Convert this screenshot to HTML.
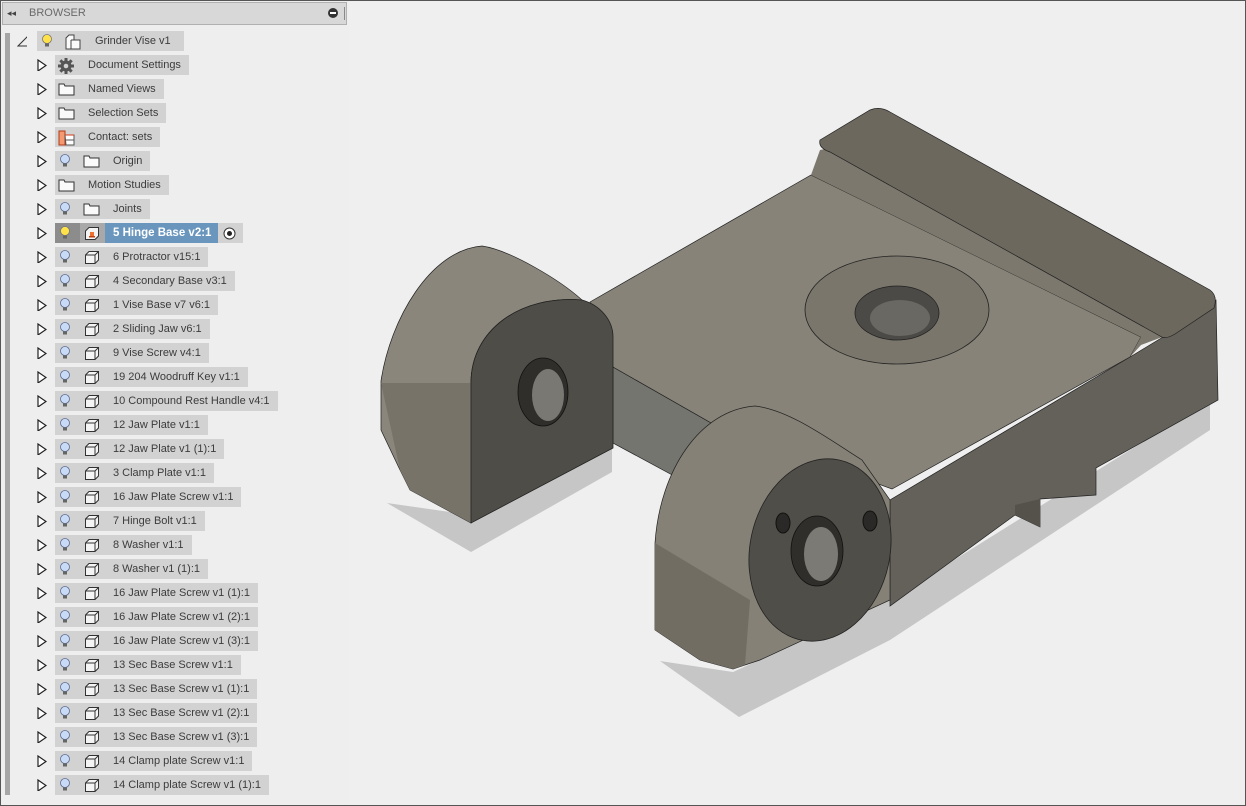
<!DOCTYPE html>
<html><head><meta charset="utf-8"><style>
*{margin:0;padding:0;box-sizing:border-box}
body{width:1246px;height:806px;overflow:hidden;background:#efefef;font-family:"Liberation Sans",sans-serif;position:relative}
.frame{position:absolute;left:0;top:0;width:1246px;height:806px;border:1px solid #555;pointer-events:none;z-index:9}
#side{position:absolute;left:0;top:0;width:349px;height:806px;background:#eeeeee}
#hdr{position:absolute;left:2px;top:2px;width:345px;height:23px;background:#d8d8d8;border:1px solid #b0b0b0;font-size:11px;color:#6a6a6a;line-height:21px}
#bar{position:absolute;left:5px;top:33px;width:5px;height:762px;background:#a6a6a6}
.row{position:absolute;height:20px;font-size:11px;color:#3c3c3c;line-height:20px}
.tri{position:absolute;left:37px;width:10px;height:12px}
.box{position:absolute;left:55px;height:20px;background:#d2d2d2;white-space:nowrap;padding-right:8px}
.bulb{position:absolute;left:4px;top:3px}
.ico{position:absolute;top:3px}
.t1{padding-left:58px}
.t2{padding-left:33px}
</style></head><body>
<div id="side">
<div id="hdr"><span style="position:absolute;left:4px;top:0;font-size:9px;color:#444">◂◂</span><span style="position:absolute;left:26px">BROWSER</span><span style="position:absolute;left:325px;top:5px;width:10px;height:10px;border-radius:50%;background:#333"></span><span style="position:absolute;left:327px;top:9px;width:6px;height:2px;background:#fff"></span><span style="position:absolute;left:341px;top:4px;width:1px;height:13px;background:#888"></span></div>
<div id="bar"></div>
<div id="rows"></div>
</div>

<svg style="position:absolute;left:0;top:0" width="1246" height="806" viewBox="0 0 1246 806">
<polygon points="387,503 471,552 612,472 612,430 471,515" fill="#c6c6c6"/>
<polygon points="660,661 739,717 890,640 1210,430 1210,400 890,600 733,672" fill="#c6c6c6"/>
<polygon points="1163,337 1216,300 1218,400 1096,468 1096,495 1040,499 1040,527 1015,515 890,606 890,500 1130,357" fill="#64615a" stroke="#222" stroke-width="0.7"/>
<polygon points="1040,499 1040,527 1015,515 1015,505" fill="#55524c"/>
<!-- plate front face -->
<polygon points="613,367 713,424 700,490 613,443" fill="#74756f" stroke="#222" stroke-width="0.7"/>
<!-- plate top -->
<polygon points="590,302 811,175 1141,337 1130,357 892,489 713,424 613,367" fill="#878378" stroke="#222" stroke-width="0.7"/>
<polygon points="811,175 820,150 830,148 1165,336 1141,345 1130,357 1141,337" fill="#7c786e"/>
<path d="M820,140 L870,110 Q880,106 890,112 L1210,290 Q1218,296 1214,308 L1175,334 Q1165,340 1160,336 L830,152 Q818,148 820,140 Z" fill="#6c685e" stroke="#222" stroke-width="0.7"/>
<ellipse cx="897" cy="310" rx="92" ry="54" fill="#7a766c" stroke="#222" stroke-width="0.8"/>
<ellipse cx="897" cy="313" rx="42" ry="27" fill="#4b4a46" stroke="#222" stroke-width="0.8"/>
<ellipse cx="900" cy="318" rx="30" ry="18" fill="#6a6862"/>
<!-- left boss -->
<path d="M381,381 C390,320 430,250 482,246 C510,250 560,280 582,300 C520,295 471,330 471,383 L471,523 L410,490 L400,470 L381,430 Z" fill="#8a867b" stroke="#222" stroke-width="0.7"/>
<path d="M381,383 L471,383 L471,523 L410,490 L400,470 Z" fill="#777368"/>
<path d="M471,523 L471,383 C471,330 520,295 582,300 C600,305 613,320 613,337 L613,448 Z" fill="#4f4d47" stroke="#222" stroke-width="0.8"/>
<ellipse cx="543" cy="392" rx="25" ry="34" fill="#2f2e2b" stroke="#111" stroke-width="0.8"/>
<ellipse cx="548" cy="395" rx="16" ry="26" fill="#7a7872"/>
<!-- right boss -->
<path d="M655,543 C660,470 700,410 755,406 C790,410 830,440 862,460 L890,500 L890,600 L760,660 L733,669 L700,660 L655,630 Z" fill="#858176" stroke="#222" stroke-width="0.7"/>
<path d="M655,543 L750,600 L745,665 L733,669 L700,660 L655,630 Z" fill="#716d63"/>
<ellipse cx="820" cy="550" rx="70" ry="92" transform="rotate(12 820 550)" fill="#504e48" stroke="#222" stroke-width="0.8"/>
<ellipse cx="817" cy="551" rx="26" ry="35" fill="#2f2e2b" stroke="#111" stroke-width="0.8"/>
<ellipse cx="821" cy="554" rx="17" ry="27" fill="#7c7a74"/>
<ellipse cx="783" cy="523" rx="7" ry="10" fill="#2a2927" stroke="#111"/>
<ellipse cx="870" cy="521" rx="7" ry="10" fill="#2a2927" stroke="#111"/>
</svg>
<div class="frame"></div>

<script>
const bulbY='<svg class="bulb" width="12" height="14" viewBox="0 0 12 14"><circle cx="6" cy="5" r="4.5" fill="#ffe24a" stroke="#777" stroke-width="0.8"/><rect x="4" y="9.5" width="4" height="3" fill="#666"/></svg>';
const bulbB='<svg class="bulb" width="12" height="14" viewBox="0 0 12 14"><circle cx="6" cy="5" r="4.5" fill="#c8daf5" stroke="#5a6d90" stroke-width="0.8"/><rect x="4" y="9.5" width="4" height="3" fill="#666"/></svg>';
const folder=x=>`<svg class="ico" style="left:${x}px" width="17" height="14" viewBox="0 0 17 14"><path d="M1,2 H6 L7,4 H16 V13 H1 Z" fill="#fafafa" stroke="#333" stroke-width="1"/></svg>`;
const cube=x=>`<svg class="ico" style="left:${x}px" width="16" height="15" viewBox="0 0 16 15"><path d="M1.5,5 L5,1.5 H14.5 V10 L11,13.5 H1.5 Z M1.5,5 H11 V13.5 M11,5 L14.5,1.5" fill="#f4f4f4" stroke="#333" stroke-width="1"/></svg>`;
const gear='<svg class="ico" style="left:3px" width="16" height="16" viewBox="0 0 16 16"><g fill="#555"><circle cx="8" cy="8" r="5.5"/><rect x="6.5" y="0" width="3" height="16"/><rect x="0" y="6.5" width="16" height="3"/><rect x="6.5" y="0" width="3" height="16" transform="rotate(45 8 8)"/><rect x="6.5" y="0" width="3" height="16" transform="rotate(-45 8 8)"/></g><circle cx="8" cy="8" r="2.3" fill="#d2d2d2"/></svg>';
const contact='<svg class="ico" style="left:3px" width="17" height="16" viewBox="0 0 17 16"><rect x="1" y="1" width="6" height="14" fill="#f59a70" stroke="#b03a1a"/><path d="M7,5 H16 V15 H8 Z M8,10 H16" fill="#fff" stroke="#555"/><path d="M7,5 H16" stroke="#d03a1a"/></svg>';
const rows=[
["Document Settings",'g'],["Named Views",'f'],["Selection Sets",'f'],["Contact: sets",'c'],["Origin",'bf'],["Motion Studies",'f'],["Joints",'bf'],["5 Hinge Base v2:1",'h'],
["6 Protractor v15:1"],["4 Secondary Base v3:1"],["1 Vise Base v7 v6:1"],["2 Sliding Jaw v6:1"],["9 Vise Screw v4:1"],["19 204 Woodruff Key v1:1"],["10 Compound Rest Handle v4:1"],["12 Jaw Plate v1:1"],["12 Jaw Plate v1 (1):1"],["3 Clamp Plate v1:1"],["16 Jaw Plate Screw v1:1"],["7 Hinge Bolt v1:1"],["8 Washer v1:1"],["8 Washer v1 (1):1"],["16 Jaw Plate Screw v1 (1):1"],["16 Jaw Plate Screw v1 (2):1"],["16 Jaw Plate Screw v1 (3):1"],["13 Sec Base Screw v1:1"],["13 Sec Base Screw v1 (1):1"],["13 Sec Base Screw v1 (2):1"],["13 Sec Base Screw v1 (3):1"],["14 Clamp plate Screw v1:1"],["14 Clamp plate Screw v1 (1):1"]];
let h='';
const top0=31;
h+=`<div class="row" style="top:${top0}px;left:0;width:349px"><svg class="tri" style="left:17px;top:4px" width="12" height="12"><path d="M1,11 H11 V1 Z" fill="none" stroke="#333"/></svg><div class="box" style="left:37px;padding-left:58px;padding-right:13px">${bulbY}<svg class="ico" style="left:28px" width="16" height="16" viewBox="0 0 16 16"><path d="M1,4 L4,1 H9 V6 H15 V15 H1 Z M6,6 V15 M9,6 H6" fill="#fafafa" stroke="#444"/></svg>Grinder Vise v1</div></div>`;
rows.forEach((r,i)=>{
 const y=top0+24*(i+1);const k=r[1]||'p';
 let inner='',cls='t1';
 if(k==='g'){inner=gear;cls='t2'}
 else if(k==='f'){inner=folder(3);cls='t2'}
 else if(k==='c'){inner=contact;cls='t2'}
 else if(k==='bf'){inner=bulbB+folder(28)}
 else if(k==='p'){inner=bulbB+cube(29)}
 const tri=`<svg class="tri" style="top:4px" width="10" height="13"><path d="M1,1 L9,6.5 L1,12 Z" fill="#fff" stroke="#222" stroke-width="1.2"/></svg>`;
 if(k==='h'){
  h+=`<div class="row" style="top:${y}px;left:0;width:349px">${tri}<div class="box" style="width:188px;padding:0"><div style="position:absolute;left:0;top:0;width:25px;height:20px;background:#8c8c8c"></div><div style="position:absolute;left:25px;top:0;width:25px;height:20px;background:#a9a9a9"></div>${bulbY}<svg class="ico" style="left:29px" width="16" height="15" viewBox="0 0 16 15"><path d="M1.5,5 L5,1.5 H14.5 V10 L11,13.5 H1.5 Z" fill="#f4f4f4" stroke="#333"/><rect x="6" y="6" width="4" height="4" fill="#f07030"/><rect x="5" y="10" width="6" height="1.5" fill="#c04010"/></svg><div style="position:absolute;left:50px;top:0;width:113px;height:20px;background:#6a96be;color:#fff;font-weight:bold;font-size:11.5px;padding-left:8px">5 Hinge Base v2:1</div><svg style="position:absolute;left:168px;top:4px" width="13" height="13"><circle cx="6.5" cy="6.5" r="5.5" fill="#fff" stroke="#333"/><circle cx="6.5" cy="6.5" r="2.5" fill="#222"/></svg></div></div>`;
 } else {
  h+=`<div class="row" style="top:${y}px;left:0;width:349px">${tri}<div class="box ${cls}">${inner}${r[0]}</div></div>`;
 }
});
document.getElementById('rows').innerHTML=h;
</script>
</body></html>
